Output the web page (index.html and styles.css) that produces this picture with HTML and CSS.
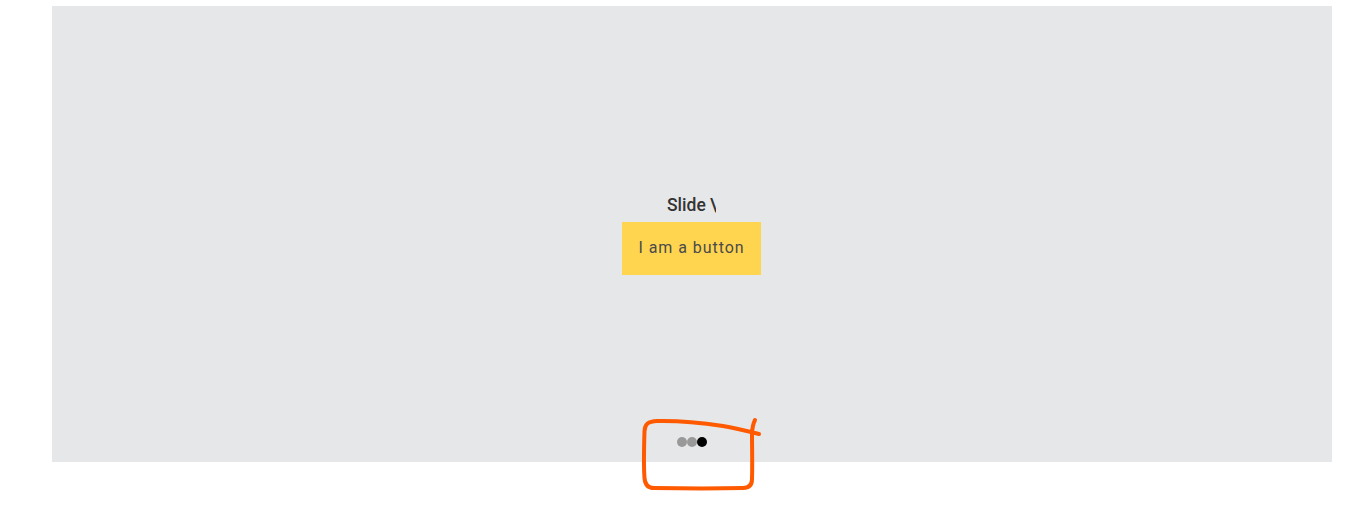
FILE: index.html
```html
<!DOCTYPE html>
<html lang="en">
<head>
  <meta charset="UTF-8">
  <title>Slider</title>
  <link rel="stylesheet" href="styles.css">
</head>
<body>
  <div class="page">
    <div class="slide">
      <div class="slide-content">
        <h2 class="slide-title">Slide \</h2>
        <button class="slide-btn">I am a button</button>
      </div>
      <div class="dots">
        <span class="dot"></span>
        <span class="dot"></span>
        <span class="dot active"></span>
      </div>
    </div>
    <!-- hand drawn marker around the dots -->
    <svg class="scribble" width="130" height="80" viewBox="0 0 130 80">
      <path d="M124 23 C112 20 100 17 88 15 C68 12 42 9.500 22 10 C13 10.500 10 13 9.500 20 C9 36 8.500 54 9.500 67 C10 74 13 77 19 77 C50 77.500 85 77.500 108 77 C114 77 117 74 117 68 C117.500 52 117 36 117 24 C117 18 118 13 120 9" />
    </svg>
  </div>
</body>
</html>
```

FILE: styles.css
```css
/* General Reset */
* {
  margin: 0;
  padding: 0;
  box-sizing: border-box;
}

body {
  font-family: Roboto, "Liberation Sans", sans-serif;
  background-color: #fff;
  height: 505px;
  overflow: hidden;
}

.page {
  position: relative;
  padding: 6px 34px 0 52px;
}

/* Slide */
.slide {
  position: relative;
  height: 456px;
  background-color: #e6e7e9;
  display: flex;
  align-items: center;
  justify-content: center;
}

.slide-content {
  display: flex;
  flex-direction: column;
  align-items: center;
  gap: 7px;
  margin-right: 1px;
  margin-top: 2px;
}

.slide-title {
  width: 49px;
  overflow: hidden;
  white-space: nowrap;
  font-size: 17.500px;
  line-height: 20px;
  font-weight: 500;
  color: #333;
}

.slide-btn {
  width: 139px;
  height: 53px;
  padding-bottom: 2px;
  border: none;
  background-color: #ffd54f;
  color: #4a4a4a;
  font-family: inherit;
  font-size: 16px;
  letter-spacing: 0.950px;
}

/* Dots */
.dots {
  position: absolute;
  left: 0;
  right: 0;
  bottom: 15px;
  display: flex;
  justify-content: center;
}

.dot {
  width: 10px;
  height: 10px;
  border-radius: 50%;
  background-color: #999;
}

.dot.active {
  background-color: #000;
}

.scribble {
  position: absolute;
  left: 635px;
  top: 411px;
}

.scribble path {
  fill: none;
  stroke: #ff5a00;
  stroke-width: 4;
  stroke-linecap: round;
  stroke-linejoin: round;
}
```
